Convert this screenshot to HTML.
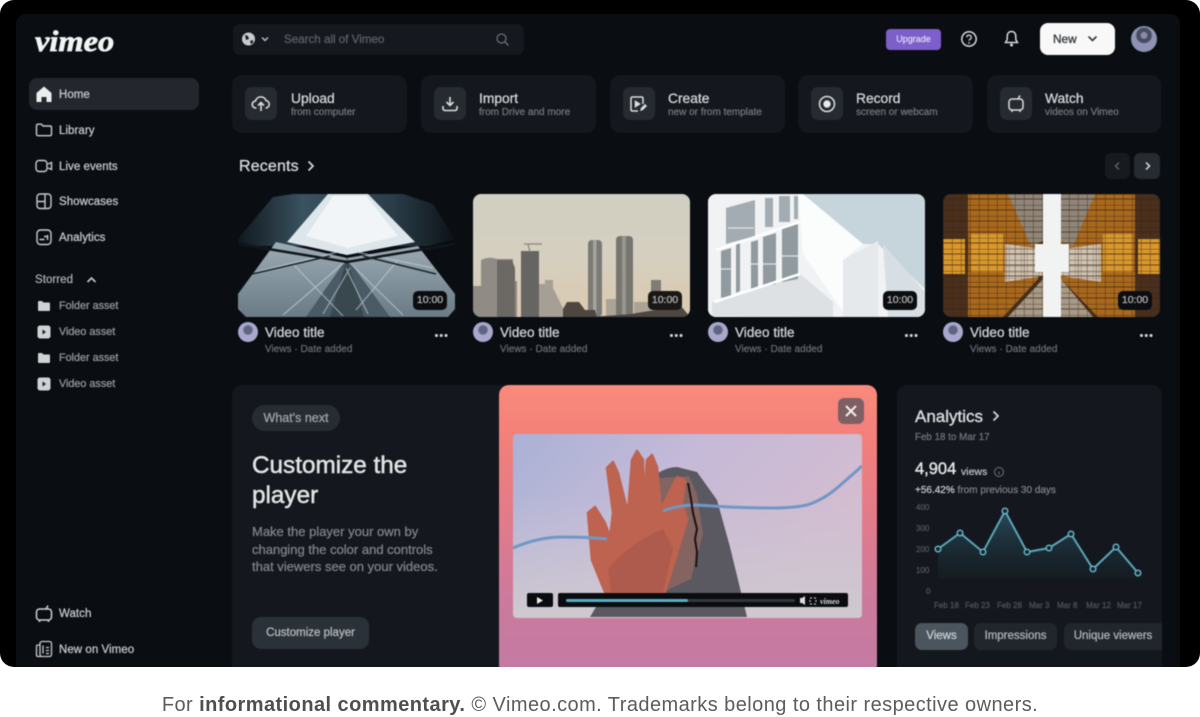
<!DOCTYPE html>
<html><head><meta charset="utf-8"><style>
*{box-sizing:border-box;margin:0;padding:0}
html,body{width:1200px;height:717px;overflow:hidden;background:#fff;font-family:"Liberation Sans",sans-serif}
.a{position:absolute}
#shot{position:absolute;left:0;top:0;width:1200px;height:667px;background:#000;border-radius:14px;overflow:hidden}
#pan{position:absolute;left:16px;top:14px;width:1164px;height:670px;background:#0a0e13;border-radius:10px}
#ui{position:absolute;left:0;top:0;width:1200px;height:667px;filter:blur(.55px)}
#ui div{-webkit-text-stroke:.28px currentColor}
.t{position:absolute;white-space:nowrap;line-height:1}
.nav{font-size:11.500px;color:#c4c7ca;letter-spacing:.05px}
.sub{font-size:10.800px;color:#94989c}
.card{position:absolute;top:75px;width:175px;height:58px;background:#14181e;border-radius:10px}
.box{position:absolute;left:13px;top:12px;width:32px;height:33px;background:#262b31;border-radius:7px}
.card b{position:absolute;left:59px;top:17px;font-size:13.800px;font-weight:400;color:#d4d6d8;line-height:1;white-space:nowrap;-webkit-text-stroke:.3px currentColor}
.card i{position:absolute;left:59px;top:33px;font-size:10px;color:#6f7479;font-style:normal;line-height:1;white-space:nowrap}
.th{position:absolute;top:194px;width:217px;height:123px;border-radius:8px;overflow:hidden}
.dur{position:absolute;right:8px;top:97px;width:34px;height:19px;background:#0b0d10;border-radius:5px;color:#b0b2b4;font-size:10.500px;line-height:19px;text-align:center}
.av{position:absolute;top:322px;width:20px;height:20px;border-radius:50%;background:radial-gradient(circle at 50% 40%,#5d6580 0 26%,#aaa6cc 34% 100%)}
.vt{top:326px;font-size:13.500px;color:#cdd0d2;letter-spacing:.05px;-webkit-text-stroke:.35px currentColor!important}
.vs{top:345px;font-size:9.900px;color:#666b70;letter-spacing:.08px}
.dots{position:absolute;top:334px;width:13px;height:3px;background:radial-gradient(circle at 1.500px 1.500px,#d0d2d4 1.500px,transparent 1.600px) 0 0/4.800px 3px}
.pill{position:absolute;top:623px;height:27px;border-radius:7px;background:#20262c;color:#b0b4b7;font-size:11.500px;line-height:27px;text-align:center;white-space:nowrap;overflow:hidden}
.ax{position:absolute;font-size:8px;color:#4e5358;line-height:1;white-space:nowrap}
#foot{position:absolute;left:0;top:694px;width:1200px;text-align:center;font-size:20px;line-height:22px;color:#5c5c5c;white-space:nowrap;letter-spacing:.44px}
#foot b{color:#4f4f4f}
</style></head><body>
<div id="shot"><div id="pan"></div>
<div id="ui">
<div class="t" style="left:35px;top:25px;font:italic bold 30px 'Liberation Serif',serif;color:#f2f3f3;transform:scaleX(1.080);transform-origin:0 0;-webkit-text-stroke:.7px #f2f3f3">vimeo</div>

<div class="a" style="left:233px;top:24px;width:291px;height:31px;background:#15181e;border-radius:7px"></div>
<svg class="a" style="left:241px;top:31px" width="28" height="16" viewBox="0 0 28 16"><circle cx="7.500" cy="8" r="6.500" fill="#c9cbcd"/><path d="M4 4l3 1 1 3-3 1zM9 10l3-1 0 3-2 1z" fill="#1a1d22"/><path d="M21 6.500l3 3 3-3" fill="none" stroke="#bbb" stroke-width="1.500"/></svg>
<div class="t" style="left:284px;top:34px;font-size:11.600px;color:#5c6166">Search all of Vimeo</div>
<svg class="a" style="left:495px;top:32px" width="15" height="15" viewBox="0 0 15 15"><circle cx="6.500" cy="6.500" r="4.500" fill="none" stroke="#6b7075" stroke-width="1.300"/><path d="M10 10l3.500 3.500" stroke="#6b7075" stroke-width="1.300"/></svg>

<div class="a" style="left:886px;top:29px;width:55px;height:21px;background:#7d5fcb;border-radius:4px;color:#d9d2f0;font-size:9px;line-height:21px;text-align:center">Upgrade</div>
<svg class="a" style="left:960px;top:30px" width="18" height="18" viewBox="0 0 18 18"><circle cx="9" cy="9" r="7.200" fill="none" stroke="#d6d8da" stroke-width="1.500"/><path d="M6.800 7.300a2.200 2.200 0 1 1 3.200 2c-.7.400-1 .7-1 1.500" fill="none" stroke="#d6d8da" stroke-width="1.300"/><circle cx="9" cy="13" r=".9" fill="#d6d8da"/></svg>
<svg class="a" style="left:1003px;top:29px" width="17" height="19" viewBox="0 0 17 19"><path d="M8.500 2.500c3 0 4.300 2.300 4.300 5v3l1.700 3h-12l1.700-3v-3c0-2.700 1.300-5 4.300-5z" fill="none" stroke="#d6d8da" stroke-width="1.500"/><circle cx="8.500" cy="16" r="1.500" fill="#d6d8da"/></svg>
<div class="a" style="left:1040px;top:23px;width:75px;height:32px;background:#f8f8f8;border-radius:8px"></div>
<div class="t" style="left:1053px;top:34px;font-size:11.800px;color:#33373b;-webkit-text-stroke:.3px #33373b">New</div>
<svg class="a" style="left:1087px;top:35px" width="11" height="8" viewBox="0 0 11 8"><path d="M1.500 1.500l4 4 4-4" fill="none" stroke="#33373b" stroke-width="1.600"/></svg>
<div class="a" style="left:1131px;top:26px;width:26px;height:26px;border-radius:50%;background:radial-gradient(circle at 50% 36%,#8f8aa5 0 14%,#464e64 18% 34%,#8f92b4 40% 72%,#5f7c86 100%)"></div>

<!-- sidebar -->
<div class="a" style="left:29px;top:78px;width:170px;height:32px;background:#23272d;border-radius:8px"></div>
<svg class="a" style="left:35px;top:85px" width="18" height="18" viewBox="0 0 18 18"><path d="M1.500 8L9 1.500 16.500 8v9h-5v-5h-5v5h-5z" fill="#eceded"/></svg>
<div class="t nav" style="left:59px;top:90px">Home</div>
<svg class="a" style="left:35px;top:121px" width="18" height="18" viewBox="0 0 18 18" fill="none" stroke="#c9cbcd" stroke-width="1.400"><path d="M1.500 5c0-1 .6-1.800 1.500-1.800h3.500l1.500 1.800h7c1 0 1.500.6 1.500 1.500v6.500c0 1-.6 1.700-1.500 1.700H3c-1 0-1.500-.7-1.500-1.700z"/></svg>
<div class="t nav" style="left:59px;top:126px">Library</div>
<svg class="a" style="left:35px;top:157px" width="18" height="18" viewBox="0 0 18 18" fill="none" stroke="#c9cbcd" stroke-width="1.400"><rect x="1" y="3.500" width="11" height="11" rx="3"/><path d="M13 7l3.500-1.500v7L13 11" /></svg>
<div class="t nav" style="left:59px;top:162px">Live events</div>
<svg class="a" style="left:35px;top:192px" width="18" height="18" viewBox="0 0 18 18" fill="none" stroke="#c9cbcd" stroke-width="1.400"><rect x="2" y="2" width="14" height="14.500" rx="3"/><path d="M2 9.500h8M10 2v14.500"/></svg>
<div class="t nav" style="left:59px;top:197px">Showcases</div>
<svg class="a" style="left:35px;top:228px" width="18" height="18" viewBox="0 0 18 18" fill="none" stroke="#c9cbcd" stroke-width="1.400"><rect x="2" y="2" width="14" height="14.500" rx="3.500"/><path d="M4.500 11.500h5M12.500 7v5M9 8.500h3"/></svg>
<div class="t nav" style="left:59px;top:233px">Analytics</div>
<div class="t nav" style="left:35px;top:275px;color:#a8abae">Storred</div>
<svg class="a" style="left:86px;top:276px" width="11" height="8" viewBox="0 0 11 8"><path d="M1.500 6l4-4 4 4" fill="none" stroke="#c9cbcd" stroke-width="1.600"/></svg>

<svg class="a" style="left:37px;top:300px" width="14" height="12" viewBox="0 0 14 12"><path d="M1 2c0-.6.4-1 1-1h3l1.500 1.500H12c.6 0 1 .4 1 1V10c0 .6-.4 1-1 1H2c-.6 0-1-.4-1-1z" fill="#d0d2d4"/></svg>
<div class="t sub" style="left:59px;top:301px">Folder asset</div>
<svg class="a" style="left:37px;top:325px" width="14" height="14" viewBox="0 0 14 14"><rect width="13" height="13" x=".5" y=".5" rx="2.500" fill="#d0d2d4"/><path d="M5.500 4.500l3.500 2.500-3.500 2.500z" fill="#1a1c20"/></svg>
<div class="t sub" style="left:59px;top:327px">Video asset</div>
<svg class="a" style="left:37px;top:352px" width="14" height="12" viewBox="0 0 14 12"><path d="M1 2c0-.6.4-1 1-1h3l1.500 1.500H12c.6 0 1 .4 1 1V10c0 .6-.4 1-1 1H2c-.6 0-1-.4-1-1z" fill="#d0d2d4"/></svg>
<div class="t sub" style="left:59px;top:353px">Folder asset</div>
<svg class="a" style="left:37px;top:377px" width="14" height="14" viewBox="0 0 14 14"><rect width="13" height="13" x=".5" y=".5" rx="2.500" fill="#d0d2d4"/><path d="M5.500 4.500l3.500 2.500-3.500 2.500z" fill="#1a1c20"/></svg>
<div class="t sub" style="left:59px;top:379px">Video asset</div>

<svg class="a" style="left:35px;top:604px" width="18" height="19" viewBox="0 0 18 19" fill="none" stroke="#d0d2d4" stroke-width="1.500"><rect x="1.500" y="5" width="15" height="11" rx="3"/><path d="M11 5l2-3.500M4.500 16.500v1.500M13.500 16.500v1.500"/></svg>
<div class="t nav" style="left:59px;top:609px">Watch</div>
<svg class="a" style="left:35px;top:640px" width="18" height="18" viewBox="0 0 18 18" fill="none" stroke="#c9cbcd" stroke-width="1.300"><rect x="5" y="1.500" width="11.500" height="15" rx="2"/><path d="M5 5H3c-1 0-1.500.5-1.500 1.500V15c0 1 .6 1.500 1.500 1.500h3M8 5.500v8M11 7.500h3M11 10.500h3M11 13.500h3"/></svg>
<div class="t nav" style="left:59px;top:645px">New on Vimeo</div>

<!-- action cards -->
<div class="card" style="left:232px"><div class="box"></div><b>Upload</b><i>from computer</i>
<svg class="a" style="left:19px;top:20px" width="20" height="18" viewBox="0 0 20 18" fill="none" stroke="#dcdedf" stroke-width="1.600"><path d="M5.500 13H5a3.500 3.500 0 0 1-.5-7A5.500 5.500 0 0 1 15 5.500 3.800 3.800 0 0 1 15 13h-.5M10 16V8M7 10.500L10 7.500l3 3"/></svg></div>
<div class="card" style="left:421px"><div class="box"></div><b style="left:58px">Import</b><i style="left:58px">from Drive and more</i>
<svg class="a" style="left:20px;top:20px" width="18" height="18" viewBox="0 0 18 18" fill="none" stroke="#dcdedf" stroke-width="1.600"><path d="M9 2v8M5.500 7l3.500 3.500L12.500 7M2 11v2.500c0 1.200 1 2 2 2h10c1 0 2-.8 2-2V11"/></svg></div>
<div class="card" style="left:610px"><div class="box"></div><b style="left:58px">Create</b><i style="left:58px">new or from template</i>
<svg class="a" style="left:19px;top:20px" width="20" height="18" viewBox="0 0 20 18" fill="none" stroke="#dcdedf" stroke-width="1.500"><path d="M14 9V3.500C14 2.500 13.300 2 12.500 2h-9C2.500 2 2 2.600 2 3.500v11c0 .9.600 1.500 1.500 1.500H9"/><path d="M6.500 6.500l4 2.500-4 2.500z" fill="#dcdedf"/><path d="M11 16l1-3 4-4 2 2-4 4z" fill="#dcdedf" stroke="none"/></svg></div>
<div class="card" style="left:798px"><div class="box"></div><b style="left:58px">Record</b><i style="left:58px">screen or webcam</i>
<svg class="a" style="left:20px;top:20px" width="18" height="18" viewBox="0 0 18 18"><circle cx="9" cy="9" r="7.500" fill="none" stroke="#dcdedf" stroke-width="1.500"/><circle cx="9" cy="9" r="3.700" fill="#e8e9ea"/></svg></div>
<div class="card" style="left:987px;width:174px"><div class="box"></div><b style="left:58px">Watch</b><i style="left:58px">videos on Vimeo</i>
<svg class="a" style="left:20px;top:19px" width="18" height="19" viewBox="0 0 18 19" fill="none" stroke="#dcdedf" stroke-width="1.500"><rect x="2" y="5" width="14" height="11" rx="3"/><path d="M11 5l2-3.500M5 16.500V18M13 16.500V18"/></svg></div>

<div class="t" style="left:239px;top:159px;font-size:16px;color:#d7d9db;letter-spacing:.15px;-webkit-text-stroke:.3px #d7d9db">Recents</div>
<svg class="a" style="left:306px;top:160px" width="10" height="12" viewBox="0 0 10 12"><path d="M2.500 1.500L7 6l-4.500 4.500" fill="none" stroke="#d7d9db" stroke-width="1.700"/></svg>
<div class="a" style="left:1105px;top:153px;width:25px;height:26px;background:#171b20;border-radius:6px"></div>
<div class="a" style="left:1134px;top:153px;width:26px;height:26px;background:#262b31;border-radius:6px"></div>
<svg class="a" style="left:1113px;top:160px" width="40" height="12" viewBox="0 0 40 12"><path d="M6 2.500L2.500 6 6 9.500" fill="none" stroke="#5f6468" stroke-width="1.400"/><path d="M33 2.500L36.500 6 33 9.500" fill="none" stroke="#dcdedf" stroke-width="1.500"/></svg>

<!-- thumbs -->
<div class="th" style="left:238px;background:#0a0e13">
<svg width="217" height="123" viewBox="0 0 217 123">
<defs><linearGradient id="t1a" x1="0" y1="0" x2="1" y2="0"><stop offset="0" stop-color="#10181d"/><stop offset=".3" stop-color="#3a5260"/><stop offset=".7" stop-color="#2b3f4b"/><stop offset="1" stop-color="#0c1216"/></linearGradient>
<linearGradient id="t1b" x1="0" y1="0" x2="0" y2="1"><stop offset="0" stop-color="#9dabb4"/><stop offset="1" stop-color="#6a7b86"/></linearGradient></defs>
<path d="M0 45L35 3 55 0H165L195 10 217 45 190 52H20L0 48z" fill="url(#t1a)"/>
<path d="M90 0H130L177 48 109 61 49 48z" fill="#dde6eb"/>
<path d="M95 2H128L160 42 110 54 68 42z" fill="#f1f5f7"/>
<path d="M38 48L109 64 180 52 217 100V115L210 123H8L0 115V100z" fill="url(#t1b)"/>
<path d="M109 64L152 123H68z" fill="#4a5b66"/>
<path d="M109 64L126 123H92z" fill="#39474f"/>
<path d="M18 78L100 58M118 58L195 74M45 121L109 66M109 66L165 121M55 70L105 122M160 66L118 116M85 120L112 74M130 120L108 74" stroke="#c2d0d8" stroke-width="1.200" fill="none" opacity=".65"/>
<path d="M0 50L109 68 217 50" stroke="#10171c" stroke-width="2.500" fill="none"/>
<path d="M14 80L92 62M125 62L198 80" stroke="#1b262d" stroke-width="1.500"/>
</svg><div class="dur">10:00</div></div>

<div class="th" style="left:473px">
<svg width="217" height="123" viewBox="0 0 217 123">
<defs><linearGradient id="sk" x1="0" y1="0" x2="0" y2="1"><stop offset="0" stop-color="#d0cfc2"/><stop offset=".55" stop-color="#d6cfbf"/><stop offset="1" stop-color="#dcc9ae"/></linearGradient></defs>
<rect width="217" height="123" fill="url(#sk)"/>
<path d="M0 92h8V66q8-4 16-1l16 0v22h4v36H0z" fill="#918b85"/>
<path d="M24 66h15l3 8v49H24z" fill="#6c6965"/>
<rect x="48" y="57" width="18" height="66" fill="#666562"/>
<path d="M66 90h6v-4h8v8l10 20v9H66z" fill="#a59f96"/>
<rect x="115" y="46" width="14" height="77" rx="4" fill="#7c7a75"/><rect x="120" y="46" width="3.500" height="77" fill="#a5a39c"/>
<rect x="143" y="42" width="17" height="81" rx="4" fill="#777570"/><rect x="149" y="42" width="4" height="81" fill="#98968f"/>
<path d="M133 105h10v18h-10zM161 108h28v15h-28z" fill="#aba397"/>
<rect x="178" y="86" width="10" height="20" fill="#807c75"/>
<path d="M90 123v-8l4-7h12l6 8h10l2 7zM118 123l40-3 50-8 9 11z" fill="#4d4740"/>
<path d="M51 50h18M55 50l2 8" stroke="#8a8680" stroke-width="1.200"/>
</svg><div class="dur" style="background:#1a1815">10:00</div></div>

<div class="th" style="left:708px">
<svg width="217" height="123" viewBox="0 0 217 123">
<rect width="217" height="123" fill="#c6d4dc"/>
<path d="M0 0H95L155 50H170L217 95V123H0z" fill="#f0f2f4"/>
<path d="M90 0H95L155 50 135 66V118L95 60z" fill="#fbfcfc"/>
<path d="M4 122V108L92 80 125 108V123z" fill="#dde1e4"/>
<path d="M135 66L170 47V123H135z" fill="#e6e9ec"/>
<path d="M175 50L217 98V123H180z" fill="#d7dfe4"/>
<path d="M18 14L47 6V42L18 50z M57 4H65V33H57zM71 2H82V28H71zM86 2H90V25H86z" fill="#a3acb2"/>
<path d="M13 57L23 54V102L13 104zM28 50L32 48V97L28 99zM43 48L50 46V93L43 95zM55 43L68 39V90L55 92zM74 34L90 30V85L74 88z" fill="#909a9f"/>
<path d="M20 34h26M13 75h10M43 70h7M55 70h13M74 62h16" stroke="#dfe4e7" stroke-width="1.200"/>
<path d="M8 56L92 28M6 108L92 80" stroke="#fff" stroke-width="2.500"/>
</svg><div class="dur">10:00</div></div>

<div class="th" style="left:943px">
<svg width="217" height="123" viewBox="0 0 217 123">
<defs><pattern id="gr" width="9" height="11" patternUnits="userSpaceOnUse"><path d="M0 0H9M0 0V11M0 5H9" stroke="#3a2210" stroke-width="1.100"/></pattern>
<pattern id="gg" width="6" height="6" patternUnits="userSpaceOnUse"><path d="M0 0H6M0 0V6" stroke="#5d4a3e" stroke-width="1"/></pattern></defs>
<rect width="217" height="123" fill="#4a2f1d"/>
<path d="M25 0H65L95 45V85L60 123H25z" fill="#a9691d"/>
<path d="M192 0H152L118 45V85L155 123H192z" fill="#a9691d"/>
<path d="M0 45H22V80H0zM195 45H217V80H195zM28 40H60V78H28zM160 40H190V78H160z" fill="#d8982c"/>
<path d="M65 0H100V47L88 52zM118 0H152L130 52 118 47z" fill="#8f8679"/>
<path d="M62 50L100 55V82L62 88zM118 55L158 50V88L118 82z" fill="#cfc3b2"/>
<path d="M65 123L100 85V123zM150 123L118 85V123z" fill="#a89a88"/>
<rect width="217" height="123" fill="url(#gr)" opacity=".7"/>
<path d="M62 50L100 55V82L62 88zM118 55L158 50V88L118 82z" fill="url(#gg)" opacity=".55"/>
<rect x="100" y="0" width="18" height="123" fill="#f1f2f2"/>
<rect x="92" y="50" width="34" height="28" fill="#f1f2f2"/>
</svg><div class="dur">10:00</div></div>

<div class="av" style="left:238px"></div><div class="t vt" style="left:265px">Video title</div><div class="t vs" style="left:265px">Views · Date added</div><div class="dots" style="left:435px"></div>
<div class="av" style="left:473px"></div><div class="t vt" style="left:500px">Video title</div><div class="t vs" style="left:500px">Views · Date added</div><div class="dots" style="left:670px"></div>
<div class="av" style="left:708px"></div><div class="t vt" style="left:735px">Video title</div><div class="t vs" style="left:735px">Views · Date added</div><div class="dots" style="left:905px"></div>
<div class="av" style="left:943px"></div><div class="t vt" style="left:970px">Video title</div><div class="t vs" style="left:970px">Views · Date added</div><div class="dots" style="left:1140px"></div>

<!-- whats next -->
<div class="a" style="left:232px;top:385px;width:300px;height:290px;background:#14181e;border-radius:10px"></div>
<div class="a" style="left:252px;top:405px;width:88px;height:26px;background:#272c32;border-radius:13px;color:#a0a4a7;font-size:12.500px;line-height:26px;text-align:center">What's next</div>
<div class="t" style="left:252px;top:451px;font-size:24.300px;color:#e1e3e4;line-height:30px;-webkit-text-stroke:.5px #e1e3e4">Customize the<br>player</div>
<div class="t" style="left:252px;top:523px;font-size:13px;color:#7f8387;line-height:17.600px">Make the player your own by<br>changing the color and controls<br>that viewers see on your videos.</div>
<div class="a" style="left:252px;top:617px;width:117px;height:32px;background:#2b3138;border-radius:9px;color:#b6babd;font-size:11.500px;line-height:32px;text-align:center">Customize player</div>

<!-- popup -->
<div class="a" style="left:499px;top:385px;width:378px;height:290px;border-radius:10px;background:linear-gradient(180deg,#fa8a7c 0%,#f3807a 18%,#e37b88 45%,#cd7a9c 72%,#c37ba4 100%)"></div>
<div class="a" style="left:838px;top:398px;width:26px;height:26px;background:#7e5f64;border-radius:6px"></div>
<svg class="a" style="left:838px;top:398px" width="26" height="26" viewBox="0 0 26 26"><path d="M8 8l10 10M18 8L8 18" stroke="#f2eeee" stroke-width="2"/></svg>
<svg class="a" style="left:513px;top:434px;border-radius:4px" width="349" height="184" viewBox="0 0 349 184">
<defs><linearGradient id="vs" x1="0" y1="0" x2="1" y2=".5"><stop offset="0" stop-color="#a9b2d6"/><stop offset=".45" stop-color="#c5bad8"/><stop offset="1" stop-color="#d6bdcf"/></linearGradient>
<linearGradient id="vl" x1="0" y1="0" x2="0" y2="1"><stop offset="0" stop-color="#c8c6d4" stop-opacity="0"/><stop offset="1" stop-color="#cfc9cf"/></linearGradient></defs>
<rect width="349" height="184" fill="url(#vs)"/>
<rect y="60" width="349" height="124" fill="url(#vl)"/>
<path d="M145 39Q155 33 164 33L184 38 204 66 217 113 234 183H77L92 158 145 100z" fill="#5a5860"/>
<path d="M146 44L176 42 184 60 190 100 178 145 150 158z" fill="#836460"/>
<path d="M92 158L79 126 75 79 82 73 92 89 97 103 100 79 94 34 100 28 105 39 115 79 119 26 124 17 130 26 131 69 134 26 139 21 144 33 148 74 154 63 164 43 172 46 169 69 174 86 164 119 152 158z" fill="#bd6350" stroke="#bd6350" stroke-width="2.500" stroke-linejoin="round"/>
<path d="M95 135Q115 110 150 95L160 115 150 158H98z" fill="#a8584b" opacity=".7"/>
<path d="M0 114Q25 103 50 103T94 105" fill="none" stroke="#7197c6" stroke-width="3"/>
<path d="M150 77Q165 71 184 71 225 74 260 74 280 74 294 71 310 66 324 54 338 42 349 32" fill="none" stroke="#7197c6" stroke-width="3"/>
<path d="M175 49L178 65 180 79 184 95 182 105 184 118 183 133" fill="none" stroke="#1a1212" stroke-width="2"/>
<rect x="14" y="159" width="26" height="14" rx="2" fill="#0a0c10"/><path d="M24 163l6 3.500-6 3.500z" fill="#eee"/>
<rect x="45" y="159" width="290" height="14" rx="2" fill="#0a0c10"/>
<rect x="53" y="165" width="229" height="3" rx="1.500" fill="#33383d"/><rect x="53" y="165" width="122" height="3" rx="1.500" fill="#58aec4"/>
<path d="M287 164h2l3-2v9l-3-2h-2z" fill="#ddd"/>
<rect x="297" y="164" width="6" height="6" fill="none" stroke="#ddd" stroke-dasharray="2 2"/>
<text x="307" y="170" font-family="Liberation Serif,serif" font-style="italic" font-weight="700" font-size="8" fill="#ddd">vimeo</text>
</svg>

<!-- analytics -->
<div class="a" style="left:897px;top:385px;width:265px;height:290px;background:#14181e;border-radius:10px"></div>
<div class="t" style="left:915px;top:408px;font-size:17px;color:#d9dbdc;-webkit-text-stroke:.4px #d9dbdc">Analytics</div>
<svg class="a" style="left:991px;top:410px" width="10" height="12" viewBox="0 0 10 12"><path d="M2.500 1.500L7 6l-4.500 4.500" fill="none" stroke="#d9dbdc" stroke-width="1.700"/></svg>
<div class="t" style="left:915px;top:433px;font-size:9.800px;color:#6e7377">Feb 18 to Mar 17</div>
<div class="t" style="left:915px;top:461px;font-size:16.500px;color:#e3e4e5;-webkit-text-stroke:.4px #e3e4e5">4,904</div>
<div class="t" style="left:961px;top:467px;font-size:10.500px;color:#b9bcbf">views</div>
<svg class="a" style="left:993px;top:466px" width="12" height="12" viewBox="0 0 12 12"><circle cx="6" cy="6" r="4.500" fill="none" stroke="#6e7377" stroke-width="1"/><path d="M6 5.500V8.500" stroke="#6e7377"/></svg>
<div class="t" style="left:915px;top:486px;font-size:10px;color:#7a7e82"><span style="color:#c4c7c9">+56.42%</span> from previous 30 days</div>
<div class="ax" style="left:916px;top:504px">400</div><div class="ax" style="left:916px;top:525px">300</div><div class="ax" style="left:916px;top:546px">200</div><div class="ax" style="left:916px;top:567px">100</div><div class="ax" style="left:926px;top:588px">0</div>
<svg class="a" style="left:930px;top:500px" width="220" height="100" viewBox="930 500 220 100">
<defs><linearGradient id="ar" x1="0" y1="0" x2="0" y2="1"><stop offset="0" stop-color="#2f5d6e" stop-opacity=".75"/><stop offset="1" stop-color="#1a2a33" stop-opacity=".25"/></linearGradient></defs>
<path d="M938 549L960 533 983 552 1005 511 1027 552 1049 548 1071 534 1093 569 1116 547 1138 573V578H938z" fill="url(#ar)"/>
<path d="M938 549L960 533 983 552 1005 511 1027 552 1049 548 1071 534 1093 569 1116 547 1138 573" fill="none" stroke="#5aa6ba" stroke-width="2"/>
<g fill="#15252d" stroke="#66b4c7" stroke-width="1.500"><circle cx="938" cy="549" r="2.800"/><circle cx="960" cy="533" r="2.800"/><circle cx="983" cy="552" r="2.800"/><circle cx="1005" cy="511" r="2.800"/><circle cx="1027" cy="552" r="2.800"/><circle cx="1049" cy="548" r="2.800"/><circle cx="1071" cy="534" r="2.800"/><circle cx="1093" cy="569" r="2.800"/><circle cx="1116" cy="547" r="2.800"/><circle cx="1138" cy="573" r="2.800"/></g></svg>
<div class="ax" style="left:934px;top:602px">Feb 18</div><div class="ax" style="left:965px;top:602px">Feb 23</div><div class="ax" style="left:997px;top:602px">Feb 28</div><div class="ax" style="left:1029px;top:602px">Mar 3</div><div class="ax" style="left:1057px;top:602px">Mar 8</div><div class="ax" style="left:1086px;top:602px">Mar 12</div><div class="ax" style="left:1117px;top:602px">Mar 17</div>
<div class="pill" style="left:915px;width:53px;background:#4a555e;color:#c9ced2">Views</div>
<div class="pill" style="left:974px;width:83px">Impressions</div>
<div class="pill" style="left:1064px;width:98px;border-radius:7px 0 0 7px">Unique viewers</div>
</div></div>

<div id="foot">For <b>informational commentary.</b> © Vimeo.com. Trademarks belong to their respective owners.</div>
</body></html>
